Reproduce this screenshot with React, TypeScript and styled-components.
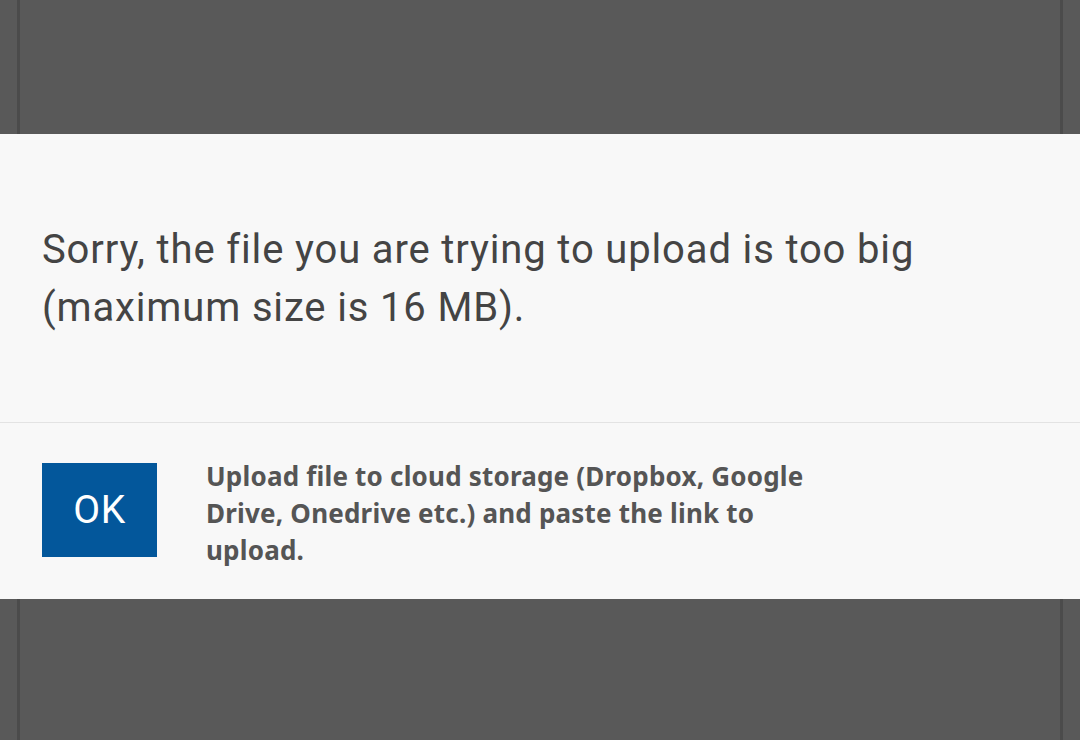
import { createGlobalStyle } from 'styled-components';
import styled from 'styled-components';

const GlobalStyle = createGlobalStyle`
  html, body {
    margin: 0;
    padding: 0;
    background: #595959;
  }
`;

const Page = styled.div`
  width: 1080px;
  height: 740px;
  overflow: hidden;
  display: flex;
  flex-direction: column;
  background:
    linear-gradient(to right,
      transparent 17px, #4b4b4b 17px, #4b4b4b 20px, transparent 20px,
      transparent 1060px, #4b4b4b 1060px, #4b4b4b 1063px, transparent 1063px),
    #595959;
`;

const Dialog = styled.div`
  margin-top: 134px;
  background: #f8f8f8;
  display: flex;
  flex-direction: column;
`;

const Message = styled.p`
  margin: 0;
  padding: 87px 42px 85px;
  font-family: Roboto, 'Liberation Sans', sans-serif;
  font-size: 40px;
  letter-spacing: 0.85px;
  line-height: 58px;
  color: #444444;
  border-bottom: 1px solid #e3e3e3;
`;

const Footer = styled.div`
  display: flex;
  align-items: flex-start;
  gap: 49px;
  padding: 40px 42px 30px;
`;

const OkButton = styled.button`
  flex: none;
  width: 115px;
  height: 94px;
  border: none;
  border-radius: 0;
  background: #03579b;
  color: #ffffff;
  font-family: Roboto, 'Liberation Sans', sans-serif;
  font-size: 39px;
  letter-spacing: 0.5px;
  padding: 0;
`;

const Hint = styled.p`
  margin: -5px 0 0;
  width: 620px;
  font-family: 'Noto Sans', 'Open Sans', sans-serif;
  font-weight: 700;
  font-size: 26px;
  letter-spacing: 0.2px;
  line-height: 37px;
  color: #555555;
`;

export default function App() {
  return (
    <>
      <GlobalStyle />
      <Page>
        <Dialog>
          <Message>
            Sorry, the file you are trying to upload is too big
            <br />
            (maximum size is 16 MB).
          </Message>
          <Footer>
            <OkButton>OK</OkButton>
            <Hint>
              Upload file to cloud storage (Dropbox, Google Drive, Onedrive
              etc.) and paste the link to upload.
            </Hint>
          </Footer>
        </Dialog>
      </Page>
    </>
  );
}
